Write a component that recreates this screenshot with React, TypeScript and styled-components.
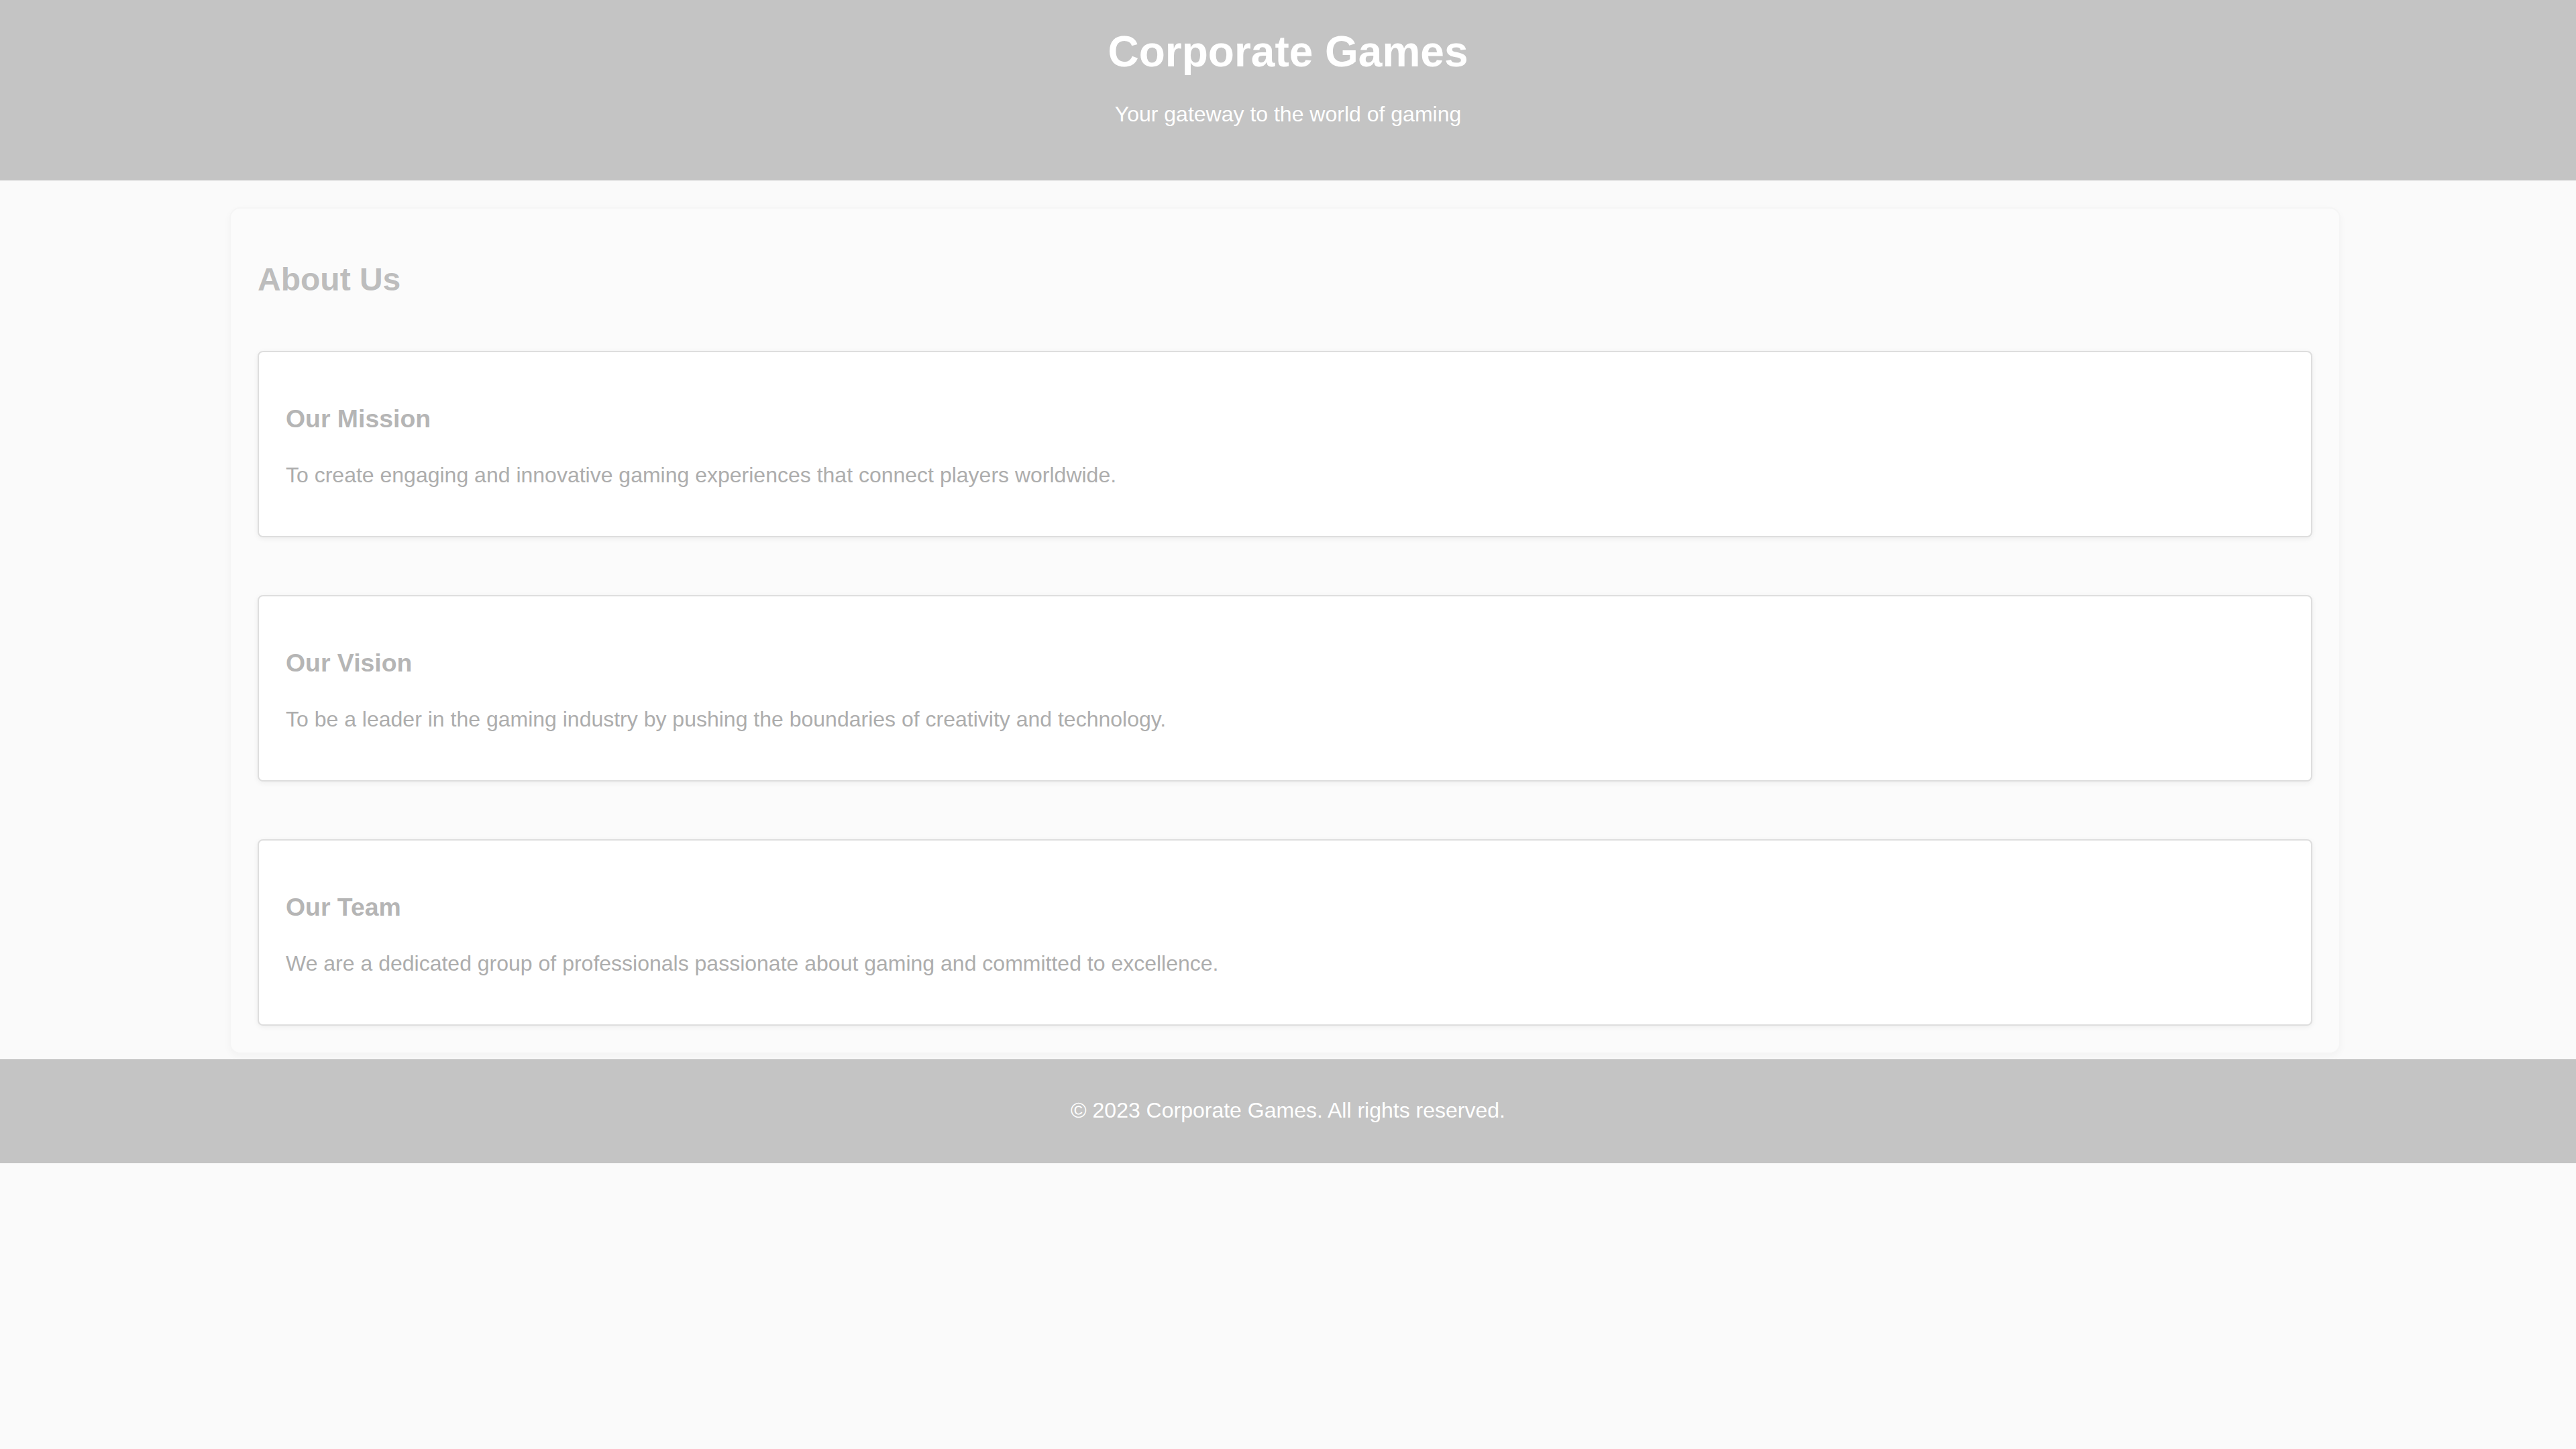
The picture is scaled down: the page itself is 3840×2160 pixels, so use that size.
import styled, { createGlobalStyle } from "styled-components";

const GlobalStyle = createGlobalStyle`
  html, body {
    margin: 0;
    padding: 0;
    background: #fafafa;
    font-family: "Liberation Sans", Arial, sans-serif;
    font-size: 32px;
  }
`;

const Header = styled.header`
  background: #c4c4c4;
  color: #ffffff;
  text-align: center;
  padding: 40px 0 80px;
`;

const Title = styled.h1`
  margin: 0;
  font-size: 64px;
  font-weight: 700;
  line-height: 74px;
`;

const Subtitle = styled.p`
  margin: 38px 0 0;
  font-size: 32px;
  line-height: 37px;
`;

const Main = styled.main`
  width: 3147px;
  box-sizing: border-box;
  margin: 40px 0 8px calc(50% - 1578px);
  padding: 40px;
  background: #fbfbfb;
  border: 2px solid #f5f5f5;
  border-radius: 16px;
  box-shadow: 0 4px 12px rgba(0, 0, 0, 0.03);
`;

const SectionTitle = styled.h2`
  margin: 38px 0 79px;
  font-size: 48px;
  line-height: 55px;
  font-weight: 700;
  color: #bdbdbd;
`;

const CardList = styled.div`
  display: flex;
  flex-direction: column;
  gap: 86px;
`;

const Card = styled.section`
  background: #ffffff;
  border: 2px solid #dedede;
  border-radius: 8px;
  box-shadow: 0 2px 8px rgba(0, 0, 0, 0.06);
  padding: 78px 40px 72px;
`;

const CardTitle = styled.h3`
  margin: 0 0 44px;
  font-size: 37.4px;
  line-height: 43px;
  font-weight: 700;
  color: #b5b5b5;
`;

const CardText = styled.p`
  margin: 0;
  font-size: 32px;
  line-height: 37px;
  color: #adadad;
`;

const Footer = styled.footer`
  background: #c4c4c4;
  color: #ffffff;
  text-align: center;
  padding: 58px 0 60px;
  font-size: 32px;
  line-height: 37px;
`;

const sections = [
  {
    title: "Our Mission",
    text: "To create engaging and innovative gaming experiences that connect players worldwide.",
  },
  {
    title: "Our Vision",
    text: "To be a leader in the gaming industry by pushing the boundaries of creativity and technology.",
  },
  {
    title: "Our Team",
    text: "We are a dedicated group of professionals passionate about gaming and committed to excellence.",
  },
];

const App = () => {
  return (
    <>
      <GlobalStyle />
      <Header>
        <Title>Corporate Games</Title>
        <Subtitle>Your gateway to the world of gaming</Subtitle>
      </Header>
      <Main>
        <SectionTitle>About Us</SectionTitle>
        <CardList>
          {sections.map((s) => (
            <Card key={s.title}>
              <CardTitle>{s.title}</CardTitle>
              <CardText>{s.text}</CardText>
            </Card>
          ))}
        </CardList>
      </Main>
      <Footer>© 2023 Corporate Games. All rights reserved.</Footer>
    </>
  );
};

export default App;
